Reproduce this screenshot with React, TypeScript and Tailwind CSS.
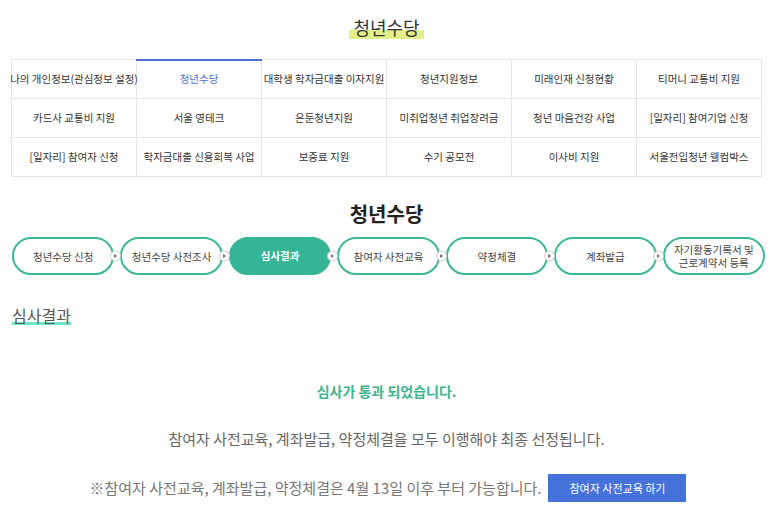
const tabs = [
  ['나의 개인정보(관심정보 설정)', '청년수당', '대학생 학자금대출 이자지원', '청년지원정보', '미래인재 신청현황', '티머니 교통비 지원'],
  ['카드사 교통비 지원', '서울 영테크', '은둔청년지원', '미취업청년 취업장려금', '청년 마음건강 사업', '[일자리] 참여기업 신청'],
  ['[일자리] 참여자 신청', '학자금대출 신용회복 사업', '보증료 지원', '수기 공모전', '이사비 지원', '서울전입청년 웰컴박스'],
];

const steps = ['청년수당 신청', '청년수당 사전조사', '심사결과', '참여자 사전교육', '약정체결', '계좌발급', '자기활동기록서 및\n근로계약서 등록'];

function Arrow() {
  return (
    <span className="absolute right-[-9px] top-1/2 z-10 flex h-[11px] w-[11px] -translate-y-1/2 items-center justify-center rounded-full border border-[#cfcfcf] bg-white">
      <svg width="5" height="5" viewBox="0 0 5 5">
        <path d="M1 0.5 L4.2 2.5 L1 4.5 Z" fill="#777" />
      </svg>
    </span>
  );
}

export default function App() {
  return (
    <div className="min-h-[515px] w-[773px] bg-white font-['Noto_Sans_CJK_KR','Noto_Sans',sans-serif] text-[#333]">
      <div className="flex justify-center pt-[15px]">
        <h1 className="bg-[linear-gradient(transparent_62%,#e3f08a_62%)] px-1 text-[18px] leading-6 text-[#333]">청년수당</h1>
      </div>

      <div className="mx-[11px] mt-5 grid w-[751px] grid-cols-6 border-l border-t border-[#e6e6e6]">
        {tabs.flat().map((t, i) => (
          <div
            key={i}
            className={
              i === 1
                ? 'relative flex h-[39px] items-center justify-center whitespace-nowrap border-b border-r border-[#e6e6e6] text-[10.5px] text-[#4f72d4]'
                : 'flex h-[39px] items-center justify-center whitespace-nowrap border-b border-r border-[#e6e6e6] text-[10.5px] text-[#333]'
            }
          >
            {i === 1 && <span className="absolute left-[-1px] right-[-1px] top-[-1px] h-[2px] bg-[#4a6fd1]" />}
            {t}
          </div>
        ))}
      </div>

      <h2 className="mt-[23px] text-center text-[20px] font-bold leading-7 text-[#222]">청년수당</h2>

      <div className="mt-[9px] flex gap-[6px] pl-3 pr-2">
        {steps.map((s, i) => (
          <div
            key={i}
            className={
              i === 2
                ? 'relative flex h-[38px] flex-1 items-center justify-center rounded-full border-2 border-[#35b596] bg-[#35b596] text-[10.5px] font-bold text-white'
                : 'relative flex h-[38px] flex-1 items-center justify-center whitespace-pre-line rounded-full border-2 border-[#3ab795] bg-white text-center text-[10.5px] leading-[13px] text-[#444]'
            }
          >
            {s}
            {i < steps.length - 1 && <Arrow />}
          </div>
        ))}
      </div>

      <div className="mt-7 px-3">
        <h3 className="relative inline-block text-[16px] leading-6 text-[#555]">
          <span className="absolute bottom-[2px] left-0 right-0 h-[3px] bg-[#6ee6c8]" />
          <span className="relative">심사결과</span>
        </h3>
      </div>

      <p className="mt-[54px] text-center text-[14px] font-bold leading-5 text-[#3cb48f]">심사가 통과 되었습니다.</p>

      <p className="mt-[27px] text-center text-[15px] leading-[22px] text-[#666]">
        참여자 사전교육, 계좌발급, 약정체결을 모두 이행해야 최종 선정됩니다.
      </p>

      <div className="mt-6 flex items-center justify-center gap-[7px] pl-[3px]">
        <span className="text-[15px] text-[#777]">※참여자 사전교육, 계좌발급, 약정체결은 4월 13일 이후 부터 가능합니다.</span>
        <button className="h-[28px] w-[138px] bg-[#4673d9] text-[11px] text-white">참여자 사전교육 하기</button>
      </div>
    </div>
  );
}
